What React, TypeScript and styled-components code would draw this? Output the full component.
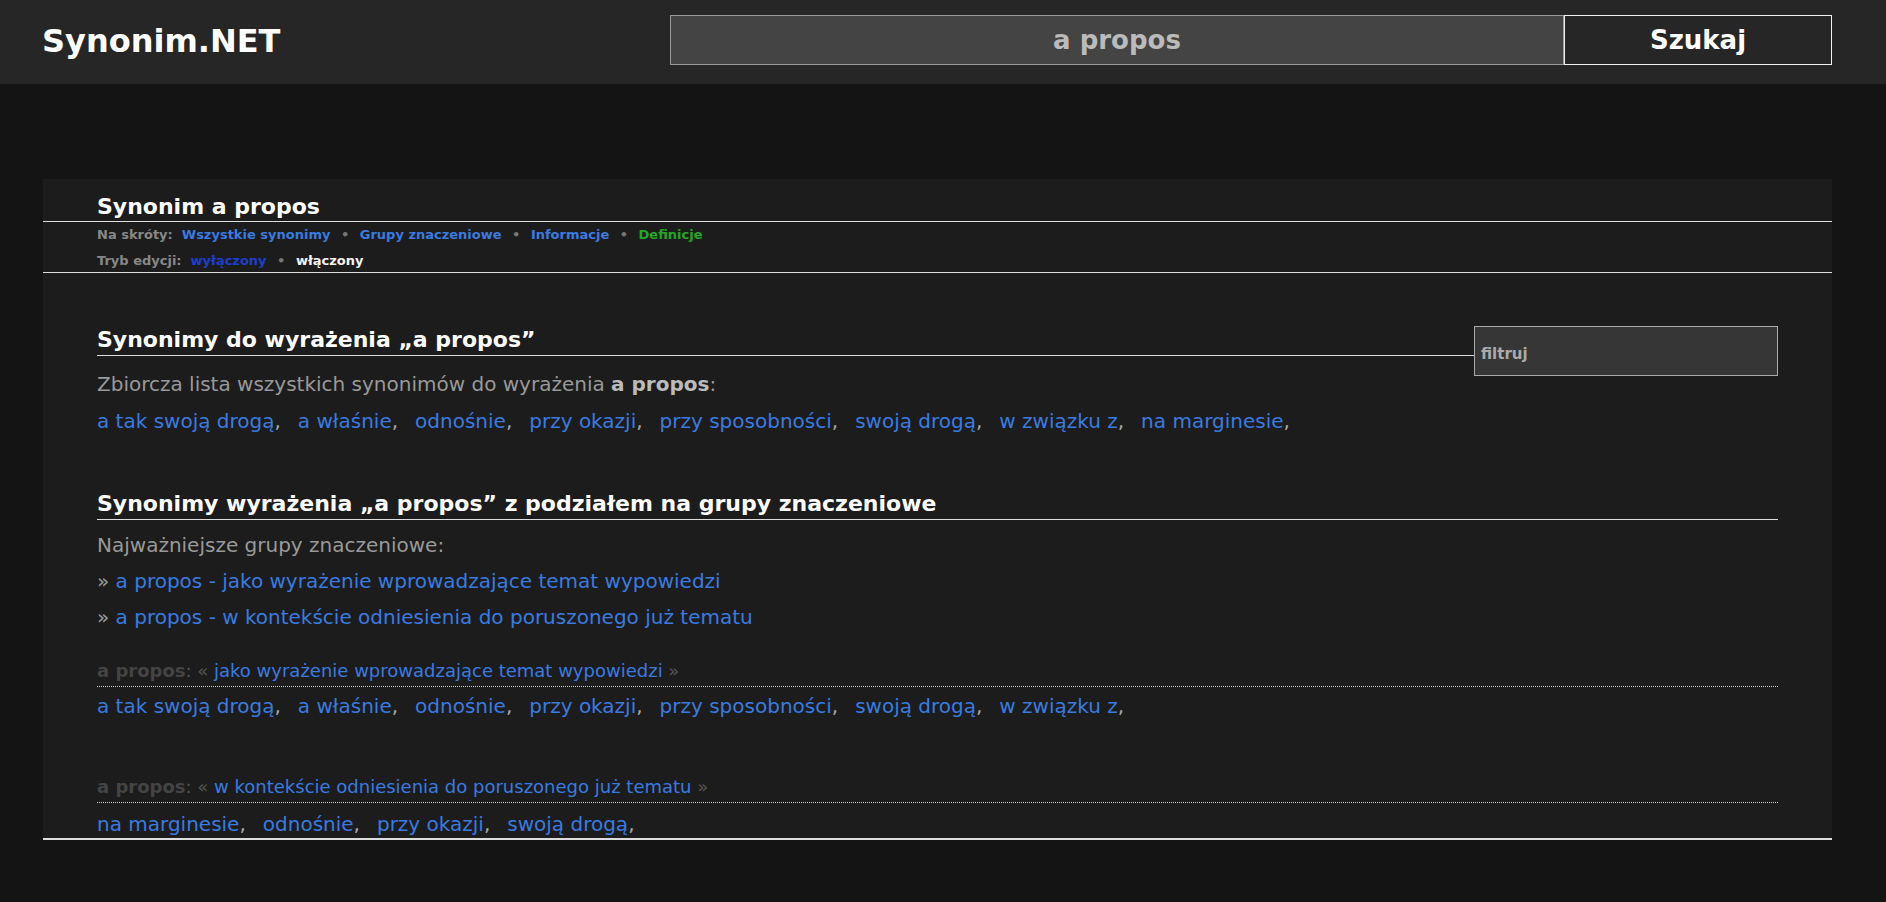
import React from "react";
import styled, { createGlobalStyle } from "styled-components";

const GlobalStyle = createGlobalStyle`
  html, body {
    margin: 0;
    padding: 0;
    background: #141414;
    font-family: "DejaVu Sans", Verdana, sans-serif;
    min-height: 100%;
  }
  * { box-sizing: border-box; }
`;

const Header = styled.header`
  height: 84px;
  background: #262626;
  display: flex;
  align-items: center;
  padding: 0 54px 0 42px;
`;

const Logo = styled.a`
  color: #fff;
  font-weight: bold;
  font-size: 32px;
  text-decoration: none;
  margin-top: -2px;
`;

const SearchForm = styled.form`
  margin-left: auto;
  display: flex;
  margin-bottom: 4px;
`;

const SearchInput = styled.input`
  width: 894px;
  height: 50px;
  background: #444;
  border: 1px solid #9a9a9a;
  color: #bbb;
  font-family: "DejaVu Sans", Verdana, sans-serif;
  font-weight: bold;
  font-size: 26px;
  text-align: center;
  outline: none;
  padding: 0;
`;

const SearchButton = styled.button`
  width: 268px;
  height: 50px;
  background: #262626;
  border: 1px solid #f2f2f2;
  color: #fff;
  font-family: "DejaVu Sans", Verdana, sans-serif;
  font-weight: bold;
  font-size: 26px;
  padding: 0;
`;

const Panel = styled.main`
  margin: 95px 54px 0 43px;
  background: #1c1c1c;
  border-bottom: 2px solid #ddd;
`;

const TitleBlock = styled.div`
  padding: 15px 54px 1px;
  border-bottom: 1px solid #ddd;
`;

const Title = styled.h1`
  margin: 0;
  font-size: 22px;
  line-height: 26px;
  color: #fff;
  font-weight: bold;
`;

const NavBlock = styled.div`
  padding: 2px 54px 0;
  border-bottom: 1px solid #ddd;
  display: flex;
  flex-direction: column;
  gap: 4px;
`;

const NavRow = styled.div`
  font-size: 13px;
  line-height: 22px;
  font-weight: bold;
  color: #888;
`;

const NavLabel = styled.span`
  margin-right: 9px;
`;

const NavLink = styled.a<{ $tone?: "blue" | "green" | "dark" | "white" }>`
  text-decoration: none;
  color: ${(p) =>
    p.$tone === "green"
      ? "#22a822"
      : p.$tone === "dark"
      ? "#1d3fcf"
      : p.$tone === "white"
      ? "#f4f4f4"
      : "#3a7be0"};
`;

const Dot = styled.span`
  color: #777;
  margin: 0 10.5px;
`;

const Content = styled.div`
  padding: 53px 54px 0;
`;

const FilterInput = styled.input`
  float: right;
  width: 304px;
  height: 50px;
  background: #363636;
  border: 1px solid #aaa;
  color: #aaa;
  font-family: "DejaVu Sans", Verdana, sans-serif;
  font-weight: bold;
  font-size: 15px;
  padding: 5px 0 0 6px;
  outline: none;
  &::placeholder {
    color: #aaa;
    opacity: 1;
  }
`;

const SectionHeading = styled.h2<{ $top?: number }>`
  margin: ${(p) => p.$top ?? 0}px 0 0;
  overflow: hidden;
  font-size: 22px;
  line-height: 26px;
  font-weight: bold;
  color: #fff;
  padding-bottom: 2px;
  border-bottom: 1px solid #ddd;
`;

const Lead = styled.p`
  margin: 13px 0 0;
  font-size: 20px;
  line-height: 30px;
  color: #999;
`;

const Strong = styled.b`
  color: #bbb;
`;

const LinkList = styled.div<{ $top: number }>`
  margin-top: ${(p) => p.$top}px;
  font-size: 20px;
  line-height: 28px;
  color: #aaa;
`;

const Syn = styled.span`
  margin-right: 17px;
  white-space: nowrap;
`;

const BlueLink = styled.a`
  color: #3a7be0;
  text-decoration: none;
`;

const GroupList = styled.div`
  margin-top: 7px;
  font-size: 20px;
  line-height: 36px;
  color: #999;
`;

const GroupItem = styled.div``;

const GroupLabel = styled.div<{ $top: number }>`
  margin-top: ${(p) => p.$top}px;
  font-size: 18px;
  line-height: 24px;
  padding-bottom: 3px;
  border-bottom: 1px dotted #cfcfcf;
  color: #555;
`;

const LabelWord = styled.b`
  color: #444;
`;

const allSyn = [
  "a tak swoją drogą",
  "a właśnie",
  "odnośnie",
  "przy okazji",
  "przy sposobności",
  "swoją drogą",
  "w związku z",
  "na marginesie",
];

const group1 = [
  "a tak swoją drogą",
  "a właśnie",
  "odnośnie",
  "przy okazji",
  "przy sposobności",
  "swoją drogą",
  "w związku z",
];

const group2 = ["na marginesie", "odnośnie", "przy okazji", "swoją drogą"];

const Synonyms: React.FC<{ items: string[]; top: number }> = ({ items, top }) => (
  <LinkList $top={top}>
    {items.map((s, i) => (
      <Syn key={i}>
        <BlueLink href="#">{s}</BlueLink>,
      </Syn>
    ))}
  </LinkList>
);

export default function App() {
  return (
    <>
      <GlobalStyle />
      <Header>
        <Logo href="#">Synonim.NET</Logo>
        <SearchForm onSubmit={(e) => e.preventDefault()}>
          <SearchInput defaultValue="a propos" />
          <SearchButton type="submit">Szukaj</SearchButton>
        </SearchForm>
      </Header>
      <Panel>
        <TitleBlock>
          <Title>Synonim a propos</Title>
        </TitleBlock>
        <NavBlock>
          <NavRow>
            <NavLabel>Na skróty:</NavLabel>
            <NavLink href="#">Wszystkie synonimy</NavLink>
            <Dot>•</Dot>
            <NavLink href="#">Grupy znaczeniowe</NavLink>
            <Dot>•</Dot>
            <NavLink href="#">Informacje</NavLink>
            <Dot>•</Dot>
            <NavLink href="#" $tone="green">Definicje</NavLink>
          </NavRow>
          <NavRow>
            <NavLabel>Tryb edycji:</NavLabel>
            <NavLink href="#" $tone="dark">wyłączony</NavLink>
            <Dot>•</Dot>
            <NavLink href="#" $tone="white">włączony</NavLink>
          </NavRow>
        </NavBlock>
        <Content>
          <FilterInput placeholder="filtruj" />
          <SectionHeading $top={1}>Synonimy do wyrażenia „a propos”</SectionHeading>
          <Lead>
            Zbiorcza lista wszystkich synonimów do wyrażenia <Strong>a propos</Strong>:
          </Lead>
          <Synonyms items={allSyn} top={8} />
          <SectionHeading $top={56}>
            Synonimy wyrażenia „a propos” z podziałem na grupy znaczeniowe
          </SectionHeading>
          <GroupList>
            <GroupItem>Najważniejsze grupy znaczeniowe:</GroupItem>
            <GroupItem>
              » <BlueLink href="#">a propos - jako wyrażenie wprowadzające temat wypowiedzi</BlueLink>
            </GroupItem>
            <GroupItem>
              » <BlueLink href="#">a propos - w kontekście odniesienia do poruszonego już tematu</BlueLink>
            </GroupItem>
          </GroupList>
          <GroupLabel $top={24}>
            <LabelWord>a propos</LabelWord>: « <BlueLink href="#">jako wyrażenie wprowadzające temat wypowiedzi</BlueLink> »
          </GroupLabel>
          <Synonyms items={group1} top={5} />
          <GroupLabel $top={55}>
            <LabelWord>a propos</LabelWord>: « <BlueLink href="#">w kontekście odniesienia do poruszonego już tematu</BlueLink> »
          </GroupLabel>
          <Synonyms items={group2} top={7} />
        </Content>
      </Panel>
    </>
  );
}
